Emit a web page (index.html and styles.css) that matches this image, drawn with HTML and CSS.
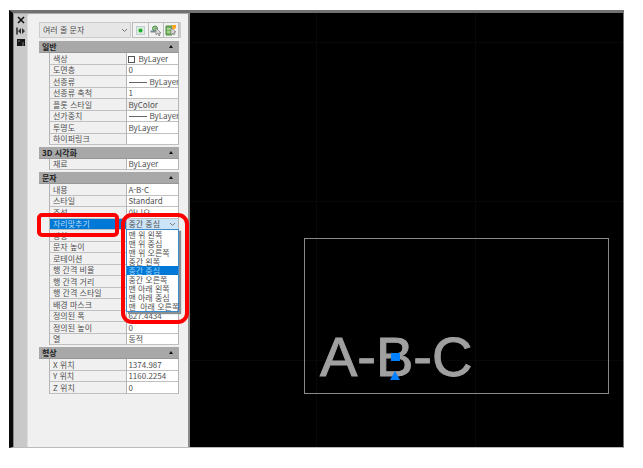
FILE: index.html
```html
<!DOCTYPE html>
<html lang="ko">
<head>
    <meta charset="UTF-8">
    <meta name="viewport" content="width=device-width, initial-scale=1.0">
    <title>특성</title>
    <link rel="stylesheet" href="styles.css">
</head>
<body>

    <div class="app">
        <div class="palette">
            <div class="titlebar">
                <button type="button" aria-label="닫기">
                    <svg width="10" height="8" viewBox="0 0 10 8"><path d="M2 1l6 6M8 1l-6 6" stroke="#111" stroke-width="1.6"/></svg>
                </button>
                <button type="button" aria-label="자동 숨기기">
                    <svg width="10" height="8" viewBox="0 0 10 8"><path d="M1 0.500v7" stroke="#222" stroke-width="1.500"/><path d="M5 1v6L2 4zM6 1l3 3-3 3z" fill="#333"/></svg>
                </button>
                <button type="button" aria-label="특성 메뉴">
                    <svg width="10" height="8" viewBox="0 0 10 8"><path d="M1 1h8v7H1z" fill="#151515"/><path d="M2 3h2M6 5h2M6 7h2" stroke="#999" stroke-width="0.800"/></svg>
                </button>
            </div>

            <form class="panel">
                <div class="toolbar">
                    <select class="object-type" aria-label="객체 유형">
                        <option>여러 줄 문자</option>
                    </select>
                    <div class="tools">
                        <button type="button" aria-label="PICKADD">
                            <svg width="13" height="13" viewBox="0 0 13 13"><rect x="2.500" y="2.500" width="8" height="8" fill="#dcebdc" stroke="#9ab" stroke-dasharray="1 1"/><circle cx="6.500" cy="6.500" r="2" fill="#1fae2c"/></svg>
                        </button>
                        <button type="button" aria-label="객체 선택">
                            <svg width="13" height="13" viewBox="0 0 13 13"><circle cx="6" cy="4.500" r="2.500" fill="#8fc487" stroke="#4d8f4a"/><path d="M1.500 7.500h5" stroke="#789" stroke-width="2"/><path d="M7 4v7l2-2 1 3 1-1-1-2h2z" fill="#ddd" stroke="#777" stroke-width="0.700"/></svg>
                        </button>
                        <button type="button" aria-label="신속 선택">
                            <svg width="13" height="13" viewBox="0 0 13 13"><path d="M2 2h6v9H2z" fill="#77b55c" stroke="#4f8a40"/><path d="M3 5h4M3 8h4" stroke="#d5ecc9"/><path d="M7 4v7l2-2 1 2 1-1-1-2h2z" fill="#ddd" stroke="#777" stroke-width="0.700"/><path d="M8 1h4v3L9 6z" fill="#ffa51f"/></svg>
                        </button>
                    </div>
                </div>

                <section class="group">
                    <h2>일반 <span class="arrow"></span></h2>
                    <table>
                        <tr><th>색상</th><td><span class="swatch"></span>ByLayer</td></tr>
                        <tr><th><label for="layer">도면층</label></th><td><input type="text" id="layer" value="0"></td></tr>
                        <tr><th>선종류</th><td><span class="line"></span>ByLayer</td></tr>
                        <tr><th><label for="ltscale">선종류 축척</label></th><td><input type="text" id="ltscale" value="1"></td></tr>
                        <tr><th>플롯 스타일</th><td class="locked">ByColor</td></tr>
                        <tr><th>선가중치</th><td><span class="line"></span>ByLayer</td></tr>
                        <tr><th><label for="transparency">투명도</label></th><td><input type="text" id="transparency" value="ByLayer"></td></tr>
                        <tr><th><label for="hyperlink">하이퍼링크</label></th><td><input type="text" id="hyperlink"></td></tr>
                    </table>
                </section>

                <section class="group">
                    <h2>3D 시각화 <span class="arrow"></span></h2>
                    <table>
                        <tr><th><label for="material">재료</label></th><td><input type="text" id="material" value="ByLayer"></td></tr>
                    </table>
                </section>

                <section class="group">
                    <h2>문자 <span class="arrow"></span></h2>
                    <table>
                        <tr><th><label for="contents">내용</label></th><td><input type="text" id="contents" value="A-B-C"></td></tr>
                        <tr><th><label for="style">스타일</label></th><td><input type="text" id="style" value="Standard"></td></tr>
                        <tr><th><label for="annotative">주석</label></th><td><input type="text" id="annotative" value="아니오"></td></tr>
                        <tr class="active">
                            <th><label for="justify">자리맞추기</label></th>
                            <td>
                                <select id="justify">
                                    <option>중간 중심</option>
                                </select>
                                <ul class="dropdown">
                                    <li>맨 위 왼쪽</li>
                                    <li>맨 위 중심</li>
                                    <li>맨 위 오른쪽</li>
                                    <li>중간 왼쪽</li>
                                    <li class="selected">중간 중심</li>
                                    <li>중간 오른쪽</li>
                                    <li>맨 아래 왼쪽</li>
                                    <li>맨 아래 중심</li>
                                    <li>맨  아래 오른쪽</li>
                                </ul>
                                <span class="mark mark-list"></span>
                            </td>
                        </tr>
                        <tr><th>방향</th><td></td></tr>
                        <tr><th>문자 높이</th><td></td></tr>
                        <tr><th>로테이션</th><td></td></tr>
                        <tr><th>행 간격 비율</th><td></td></tr>
                        <tr><th>행 간격 거리</th><td></td></tr>
                        <tr><th>행 간격 스타일</th><td></td></tr>
                        <tr><th>배경 마스크</th><td></td></tr>
                        <tr><th><label for="defwidth">정의된 폭</label></th><td><input type="text" id="defwidth" value="627.4434"></td></tr>
                        <tr><th><label for="defheight">정의된 높이</label></th><td><input type="text" id="defheight" value="0"></td></tr>
                        <tr><th><label for="columns">열</label></th><td><input type="text" id="columns" value="동적"></td></tr>
                    </table>
                    <span class="mark mark-label"></span>
                </section>

                <section class="group">
                    <h2>형상 <span class="arrow"></span></h2>
                    <table>
                        <tr><th><label for="posx">X 위치</label></th><td><input type="text" id="posx" value="1374.987"></td></tr>
                        <tr><th><label for="posy">Y 위치</label></th><td><input type="text" id="posy" value="1160.2254"></td></tr>
                        <tr><th><label for="posz">Z 위치</label></th><td><input type="text" id="posz" value="0"></td></tr>
                    </table>
                </section>
            </form>
        </div>

        <div class="canvas">
            <div class="mtext-frame"></div>
            <div class="mtext">A-B-C</div>
            <!-- grips -->
            <span class="grip-square"></span>
            <span class="grip-triangle"></span>
        </div>
    </div>

</body>
</html>
```
FILE: styles.css
```css
* {
    box-sizing: border-box;
}
body {
    margin: 0;
    min-height: 100vh;
    padding: 10px 19px 20px 9px;
    display: flex;
    background-color: #fff;
    color: #505050;
    font-family: "Noto Sans CJK KR", sans-serif;
    font-size: 8px;
    line-height: 10px;
}
button, input, select {
    font: inherit;
    color: inherit;
    margin: 0;
    padding: 0;
    border: none;
    border-radius: 0;
    background: none;
}
svg {
    display: block;
}
.app {
    flex: 1;
    display: flex;
    border-top: 3px solid #707272;
    border-left: 4px solid #0a0a0a;
    border-right: 1px solid #777;
    border-bottom: 1px solid #bbb;
}

/* properties palette */
.palette {
    width: 177px;
    flex-shrink: 0;
    display: flex;
    background-color: #c9c9c9;
    border-top: 1px solid #aaa;
    border-left: 1px solid #888;
    border-right: 2px solid #8a8a8a;
}
.titlebar {
    width: 13px;
    padding-top: 2px;
    display: flex;
    flex-direction: column;
    align-items: center;
    gap: 3px;
}
.panel {
    flex: 1;
    padding: 8px 7px 8px 11px;
    border-left: 1px solid #ddd;
    border-top-left-radius: 3px;
    background-color: #f0f0f0;
}
.toolbar {
    display: flex;
    gap: 1px;
    height: 16px;
    margin-bottom: 3px;
    border-right: 2px solid #ccc;
}
select {
    appearance: none;
    background-image: url("data:image/svg+xml,%3Csvg xmlns='http://www.w3.org/2000/svg' width='7' height='5'%3E%3Cpath d='M1 1l2.5 2.5L6 1' fill='none' stroke='%23777'/%3E%3C/svg%3E");
    background-repeat: no-repeat;
    background-position: right 2px center;
}
.object-type {
    flex: 1;
    padding-left: 3px;
    border: 1px solid #ccc;
    background-color: #e6e6e6;
}
.tools {
    display: flex;
    border: 1px solid #bbb;
}
.tools button {
    width: 15px;
    padding-left: 1px;
    background-color: #f2f2f2;
}
.tools button + button {
    border-left: 1px solid #bbb;
    padding-left: 0;
}
.group {
    position: relative;
    margin: 0 2px 2px 0;
}
.group h2 {
    display: flex;
    align-items: center;
    justify-content: space-between;
    height: 12px;
    margin: 0;
    padding: 0 6px 0 3px;
    border-bottom: 1px solid #969696;
    background-color: #a8a8a8;
    color: #222;
    font-size: 8px;
    font-weight: bold;
    line-height: 10px;
}
.arrow {
    border: 2px solid transparent;
    border-top: none;
    border-bottom: 3px solid #111;
}
table {
    width: calc(100% - 10px);
    margin-left: 10px;
    border-spacing: 0;
    table-layout: fixed;
    border-left: 1px solid #b4b4b4;
}
th, td {
    height: 12px;
    padding: 0 0 0 3px;
    border-right: 1px solid #b4b4b4;
    border-bottom: 1px solid #c0c0c0;
    font-weight: normal;
    text-align: left;
    white-space: nowrap;
}
tr:nth-child(even) th,
tr:nth-child(even) td,
tr:only-child th,
tr:only-child td {
    height: 11px;
}
th {
    width: 60%;
}
td {
    padding-left: 1px;
    background-color: #fff;
    overflow: hidden;
}
.locked {
    background-color: #f0f0f0;
}
td input {
    display: block;
    width: 100%;
    height: 10px;
}
.swatch {
    display: inline-block;
    width: 7px;
    height: 7px;
    margin-right: 3px;
    border: 1px solid #555;
    vertical-align: middle;
}
.line {
    display: inline-block;
    width: 18px;
    margin: 0 2px 0 1px;
    border-top: 1px solid #666;
    vertical-align: middle;
}
.active th {
    background-color: #0078d7;
    color: #b9dcf6;
}
.active td {
    position: relative;
    background-color: #cce4f7;
    overflow: visible;
}
.active select {
    display: block;
    width: 100%;
    height: 10px;
}
.dropdown {
    position: absolute;
    top: 100%;
    left: -1px;
    right: -1px;
    z-index: 1;
    margin: 0;
    padding: 0;
    list-style: none;
    border: 1px solid #3a8ad0;
    background-color: #fff;
    box-shadow: 2px 2px 1px #8a8f94;
}
.dropdown li {
    height: 9px;
    padding-left: 1px;
    line-height: 9px;
    white-space: pre;
}
.dropdown .selected {
    background-color: #0078d7;
    color: #9fd0f5;
}

/* red highlight boxes */
.mark {
    position: absolute;
    z-index: 2;
    border: 4px solid #f00;
    pointer-events: none;
}
.mark-label {
    top: 41px;
    left: -2px;
    width: 82px;
    height: 24px;
    border-radius: 5px;
}
.mark-list {
    top: -6px;
    left: -6px;
    width: 68px;
    height: 111px;
    border-radius: 11px;
}

/* drawing area */
.canvas {
    position: relative;
    flex: 1;
    overflow: hidden;
    background-color: #000;
    background-image: linear-gradient(#070909 1px, transparent 1px), linear-gradient(90deg, #070909 1px, transparent 1px);
    background-size: 159px 159px;
    background-position: 126px 29px;
}
.mtext-frame {
    position: absolute;
    top: 225px;
    left: 114px;
    width: 305px;
    height: 156px;
    border: 1px solid #8a8a8a;
}
.mtext {
    position: absolute;
    top: 312px;
    left: 130px;
    color: #a0a0a0;
    font-family: "Liberation Sans", Arial, sans-serif;
    font-size: 56px;
    line-height: 64px;
    -webkit-text-stroke: 1px #a0a0a0;
}
.grip-square {
    position: absolute;
    top: 340px;
    left: 201px;
    width: 9px;
    height: 8px;
    background-color: #007fff;
}
.grip-triangle {
    position: absolute;
    top: 358px;
    left: 200px;
    border: 5px solid transparent;
    border-top: none;
    border-bottom: 9px solid #007fff;
}
```
